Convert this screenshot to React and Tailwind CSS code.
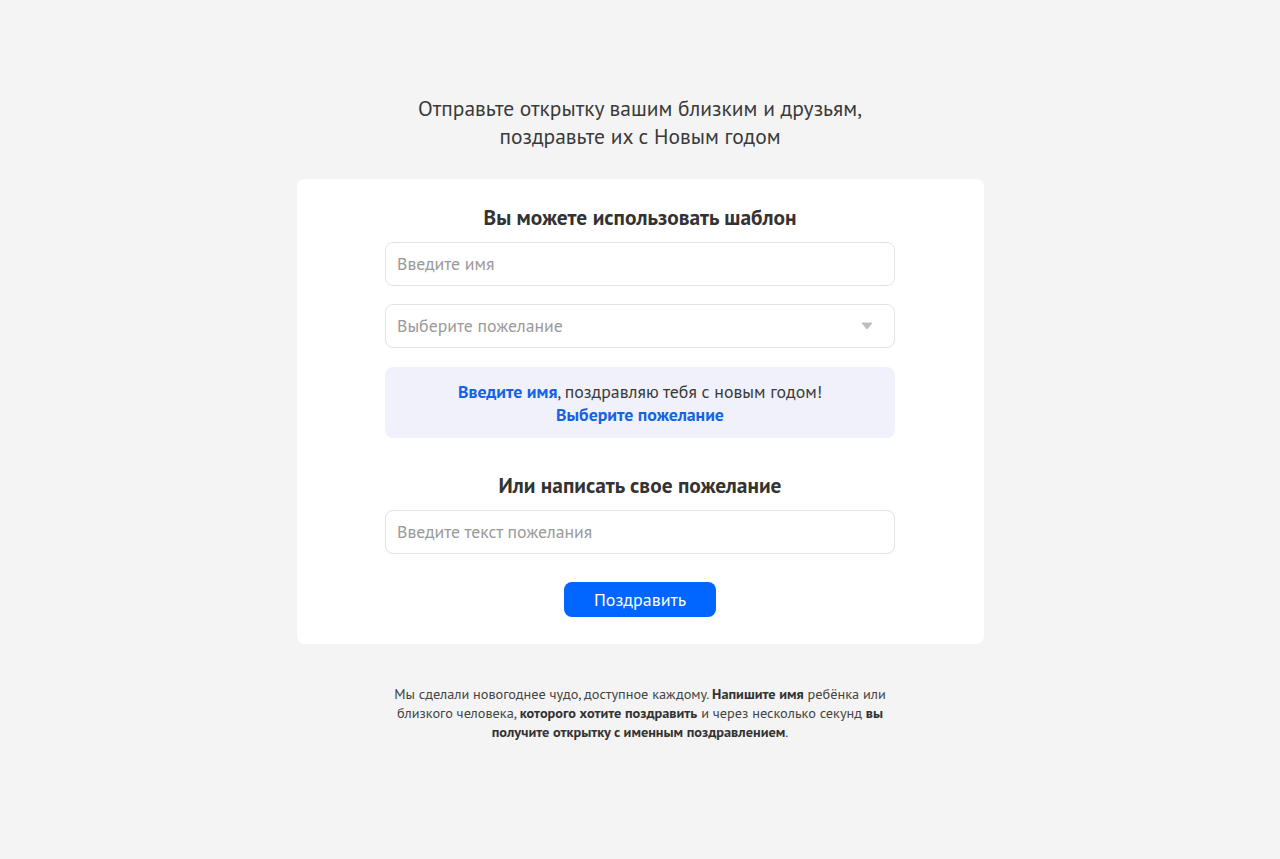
export default function App() {
  const font = { fontFamily: '"PT Sans", Roboto, "Noto Sans", sans-serif' };
  return (
    <div className="min-h-[859px] w-full bg-[#f4f4f4] flex flex-col items-center pt-[94px] text-[#333333]" style={font}>
      <h1 className="text-center text-[21.5px] leading-[28px] text-[#3a3a3a] font-normal">
        Отправьте открытку вашим близким и друзьям,
        <br />
        поздравьте их с Новым годом
      </h1>

      <div className="mt-[29px] w-[687px] bg-white rounded-[8px] pt-[24px] pb-[27px] flex flex-col items-center">
        <h2 className="text-[21.4px] leading-[28px] font-bold text-[#333333]">Вы можете использовать шаблон</h2>
        <div className="mt-[11px] w-[510px] flex flex-col gap-[18px]">
          <div className="h-[44px] rounded-[8px] border border-[#e3e3e3] flex items-center px-[11px] text-[17.8px] text-[#9a9a9a]">
            Введите имя
          </div>
          <div className="h-[44px] rounded-[8px] border border-[#e3e3e3] flex items-center justify-between px-[11px] text-[17.8px] text-[#9a9a9a]">
            <span>Выберите пожелание</span>
            <svg width="12" height="8" viewBox="0 0 12 8" className="mr-[10px]">
              <path d="M1 1.5 Q0.5 0.5 1.7 0.5 H10.3 Q11.5 0.5 11 1.5 L6.8 6.8 Q6 7.7 5.2 6.8 Z" fill="#bdbdbd" />
            </svg>
          </div>
        </div>
        <div className="mt-[19px] w-[510px] h-[71px] rounded-[8px] bg-[#f0f1fb] flex flex-col items-center justify-center text-[17.8px] leading-[23px] text-[#3a3a3a]">
          <div>
            <span className="font-bold text-[#1463e6]">Введите имя</span>, поздравляю тебя с новым годом!
          </div>
          <div className="font-bold text-[#1463e6]">Выберите пожелание</div>
        </div>
        <h2 className="mt-[33px] text-[21.4px] leading-[28px] font-bold text-[#333333]">Или написать свое пожелание</h2>
        <div className="mt-[11px] w-[510px] h-[44px] rounded-[8px] border border-[#e3e3e3] flex items-center px-[11px] text-[17.8px] text-[#9a9a9a]">
          Введите текст пожелания
        </div>
        <button className="mt-[28px] w-[152px] h-[35px] rounded-[8px] bg-[#0066ff] text-white text-[18px]">
          Поздравить
        </button>
      </div>

      <p className="mt-[40px] w-[496px] text-center text-[14.3px] leading-[19px] text-[#444444]">
        Мы сделали новогоднее чудо, доступное каждому. <b className="text-[#333333]">Напишите имя</b> ребёнка или близкого человека, <b className="text-[#333333]">которого хотите поздравить</b> и через несколько секунд <b className="text-[#333333]">вы получите открытку с именным поздравлением</b>.
      </p>
    </div>
  );
}
